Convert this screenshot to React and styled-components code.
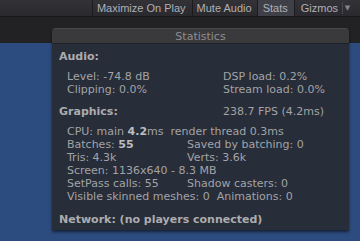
import React from "react";
import styled, { createGlobalStyle } from "styled-components";

const GlobalStyle = createGlobalStyle`
  html, body {
    margin: 0;
    padding: 0;
    background: #232326;
  }
  body {
    font-family: "DejaVu Sans", Verdana, sans-serif;
  }
`;

const Screen = styled.div`
  position: relative;
  width: 360px;
  height: 241px;
  overflow: hidden;
  display: flex;
  flex-direction: column;
  background: #232326;
`;

const Toolbar = styled.div`
  height: 16px;
  display: flex;
  justify-content: flex-end;
  align-items: stretch;
  padding-right: 8px;
  background: linear-gradient(#323237, #2a2a2e);
  border-bottom: 1px solid #18181a;
`;

const ToolButton = styled.div`
  display: flex;
  align-items: center;
  padding: 0 ${(p) => p.$pr}px 0 ${(p) => p.$pl}px;
  border-left: 1px solid #1c1c1f;
  background: ${(p) => (p.$active ? "#3e3f47" : "transparent")};
  color: #b0b0b7;
  font-family: "Liberation Sans", Arial, sans-serif;
  font-size: 11px;
  white-space: nowrap;
`;

const Arrow = styled.div`
  width: 9px;
  display: flex;
  align-items: center;
  justify-content: center;
  border-left: 1px solid #48484e;
  color: #85858c;
  font-size: 7px;
  margin: 2px 0;
`;

const Strip = styled.div`
  height: 26px;
  background: #222225;
`;

const Scene = styled.div`
  flex: 1;
  background: #2c4b7e;
`;

const Panel = styled.div`
  position: absolute;
  left: 52px;
  top: 28px;
  width: 297px;
  border-radius: 4px 4px 0 0;
  box-shadow: 0 2px 3px rgba(0, 0, 0, 0.55);
  overflow: hidden;
`;

const PanelHeader = styled.div`
  height: 14px;
  display: flex;
  align-items: center;
  justify-content: center;
  background: #3a3a3c;
  border-top: 1px solid #4a4a4c;
  color: #8e8e92;
  font-size: 11px;
`;

const PanelBody = styled.div`
  background: #272d39;
  border-top: 1px solid #1e2129;
  padding: 6px 0 4px 7px;
  color: #a3a3a6;
  font-size: 11px;
  line-height: 13px;
`;

const Section = styled.div`
  margin-bottom: ${(p) => p.$gap ?? 9}px;
`;

const Heading = styled.div`
  display: grid;
  grid-template-columns: 164px auto;
  font-weight: bold;
  color: #acacaf;
  margin-bottom: ${(p) => (p.$last ? 0 : 7)}px;
  white-space: nowrap;
`;

const HeadingNote = styled.span`
  font-weight: normal;
  color: #a3a3a6;
`;

const Rows = styled.div`
  display: grid;
  grid-template-columns: ${(p) => p.$col}px auto;
  padding-left: 8px;
  white-space: nowrap;
`;

const Wide = styled.div`
  grid-column: 1 / -1;
`;

const Strong = styled.b`
  color: #bdbdc0;
`;

export default function App() {
  return (
    <>
      <GlobalStyle />
      <Screen>
        <Toolbar>
          <ToolButton $pl={4} $pr={6}>Maximize On Play</ToolButton>
          <ToolButton $pl={4} $pr={5}>Mute Audio</ToolButton>
          <ToolButton $active $pl={5} $pr={6}>Stats</ToolButton>
          <ToolButton $pl={6} $pr={4}>Gizmos</ToolButton>
          <Arrow>▼</Arrow>
        </Toolbar>
        <Strip />
        <Scene />
        <Panel>
          <PanelHeader>Statistics</PanelHeader>
          <PanelBody>
            <Section>
              <Heading>Audio:</Heading>
              <Rows $col={156}>
                <div>Level: -74.8 dB</div>
                <div>DSP load: 0.2%</div>
                <div>Clipping: 0.0%</div>
                <div>Stream load: 0.0%</div>
              </Rows>
            </Section>
            <Section $gap={10}>
              <Heading>
                <span>Graphics:</span>
                <HeadingNote>238.7 FPS (4.2ms)</HeadingNote>
              </Heading>
              <Rows $col={120}>
                <Wide>
                  CPU: main <Strong>4.2</Strong>ms&nbsp; render thread 0.3ms
                </Wide>
                <div>
                  Batches: <Strong>55</Strong>
                </div>
                <div>Saved by batching: 0</div>
                <div>Tris: 4.3k</div>
                <div>Verts: 3.6k</div>
                <Wide>Screen: 1136x640 - 8.3 MB</Wide>
                <div>SetPass calls: 55</div>
                <div>Shadow casters: 0</div>
                <Wide>Visible skinned meshes: 0&nbsp; Animations: 0</Wide>
              </Rows>
            </Section>
            <Heading $last>Network: (no players connected)</Heading>
          </PanelBody>
        </Panel>
      </Screen>
    </>
  );
}
